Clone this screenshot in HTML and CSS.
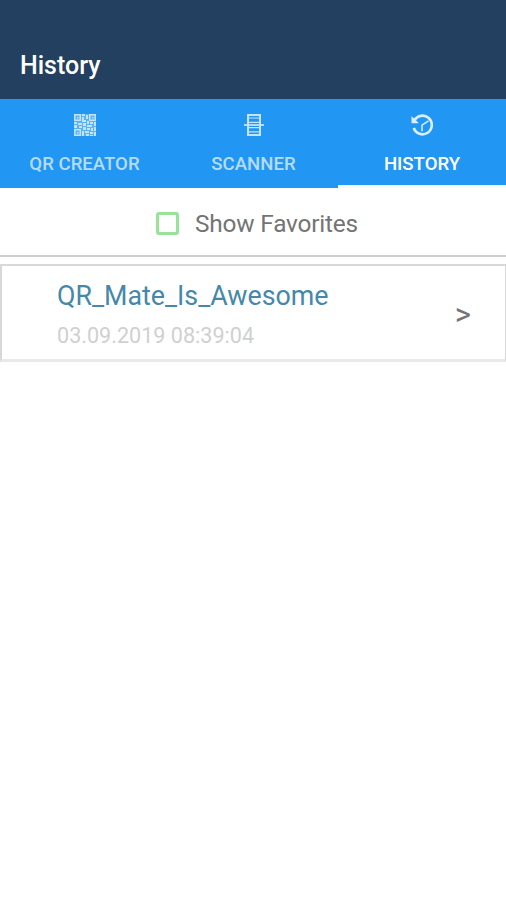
FILE: index.html
```html
<!DOCTYPE html>
<html lang="en">
<head>
  <meta charset="UTF-8" />
  <meta name="viewport" content="width=device-width, initial-scale=1.0"/>
  <title>History</title>
  <link rel="stylesheet" href="styles.css">
</head>
<body>
  <header class="app-bar">
    <h1>History</h1>
  </header>

  <nav class="tabs">
    <a class="tab">
      <svg class="icon" viewBox="0 0 24 24" fill="currentColor">
        <path opacity="0.35" d="M1 1h22v22H1z"/>
        <path fill-rule="evenodd" d="M1 1h7v7H1zM2.500 2.500v4h4v-4zM16 1h7v7h-7zM17.500 2.500v4h4v-4zM1 16h7v7H1zM2.500 17.500v4h4v-4z"/>
        <path d="M4 4h1.500v1.500H4zM19 4h1.500v1.500H19zM4 19h1.500v1.500H4zM9 1h3v2H9zM13 2h2v4h-2zM9 4h2v3h2v2H9zM1 9h3v2H1zM5 10h4v2H5zM1 12h3v3H1zM10 10h3v3h-3zM14 8h2v3h-2zM17 9h3v2h-3zM21 9h2v4h-2zM14 12h5v2h-5zM6 13h3v2H6zM10 14h3v3h-3zM14 15h3v2h-3zM18 15h2v3h-2zM21 14h2v4h-2zM9 18h2v5H9zM12 18h4v2h-4zM13 21h3v2h-3zM17 19h3v2h-3zM21 19h2v4h-2zM17 22h3v1h-3z"/>
      </svg>
      <span>QR CREATOR</span>
    </a>
    <a class="tab">
      <svg class="icon" viewBox="0 0 24 24" fill="none" stroke="currentColor">
        <path stroke-width="2" d="M6 12V2h12v10M6 12v10h12V12"/>
        <path stroke-width="1.200" d="M7 5h10M7 9.400h10M7 14.600h10M7 18.800h10"/>
        <path stroke-width="1.800" d="M2 12h20"/>
      </svg>
      <span>SCANNER</span>
    </a>
    <a class="tab active">
      <svg class="icon" viewBox="0 0 24 24" fill="none" stroke="currentColor">
        <path stroke-width="2.600" d="M4.200 7.800A9.300 9.300 0 1 1 3.700 15"/>
        <path fill="currentColor" stroke="none" d="M1.500 3v7.200h7.400z"/>
        <path stroke-width="1.500" d="M18.500 7.800l-6.500 4.400v6"/>
      </svg>
      <span>HISTORY</span>
    </a>
  </nav>

  <label class="filter">
    <input type="checkbox" />
    <span>Show Favorites</span>
  </label>

  <main class="list">
    <div class="item">
      <div class="info">
        <div class="name">QR_Mate_Is_Awesome</div>
        <div class="date">03.09.2019 08:39:04</div>
      </div>
      <span class="arrow">&gt;</span>
    </div>
  </main>
</body>
</html>
```
FILE: styles.css
```css
body {
  margin: 0;
  font-family: Roboto, sans-serif;
  background: #fff;
}
.app-bar {
  height: 99px;
  box-sizing: border-box;
  padding: 51px 20px 0;
  background: #234060;
}
.app-bar h1 {
  margin: 0;
  color: #fff;
  font-size: 25px;
  font-weight: 500;
  line-height: 30px;
}
.tabs {
  display: grid;
  grid-template-columns: 169px 169px 1fr;
  height: 89px;
  background: #2196f3;
}
.tab {
  display: flex;
  flex-direction: column;
  align-items: center;
  box-sizing: border-box;
  padding-top: 14px;
  border-bottom: 3px solid transparent;
  color: #b5ddfb;
  font-size: 18.6px;
  font-weight: 500;
  line-height: 24px;
}
.tab.active {
  color: #fff;
  border-bottom-color: #f8fcff;
}
.icon {
  width: 24px;
  height: 24px;
  margin-bottom: 15px;
  color: #c3e4fc;
}
.active .icon {
  color: #d9effe;
}
.filter {
  display: flex;
  align-items: center;
  justify-content: center;
  gap: 16px;
  height: 69px;
  padding: 3px 0 0 8px;
  box-sizing: border-box;
  border-bottom: 2px solid #cfcfcf;
  color: #747474;
  font-size: 24.4px;
  letter-spacing: -0.2px;
}
.filter input {
  appearance: none;
  width: 23px;
  height: 23px;
  margin: 0;
  border: 3px solid #98e29a;
  border-radius: 3px;
}
.list {
  padding-top: 7px;
}
.item {
  display: flex;
  align-items: center;
  justify-content: space-between;
  height: 98px;
  box-sizing: border-box;
  padding: 4px 34px 0 55px;
  border: 2px solid #d8d8d8;
  border-right-width: 1px;
  border-bottom: 3px solid #e9e9e9;
}
.name {
  color: #4588aa;
  font-size: 26.8px;
  line-height: 36px;
}
.date {
  margin-top: 6px;
  color: #d0d0d0;
  font-size: 21.6px;
  line-height: 32px;
}
.arrow {
  color: #747474;
  font-size: 31px;
}
```
